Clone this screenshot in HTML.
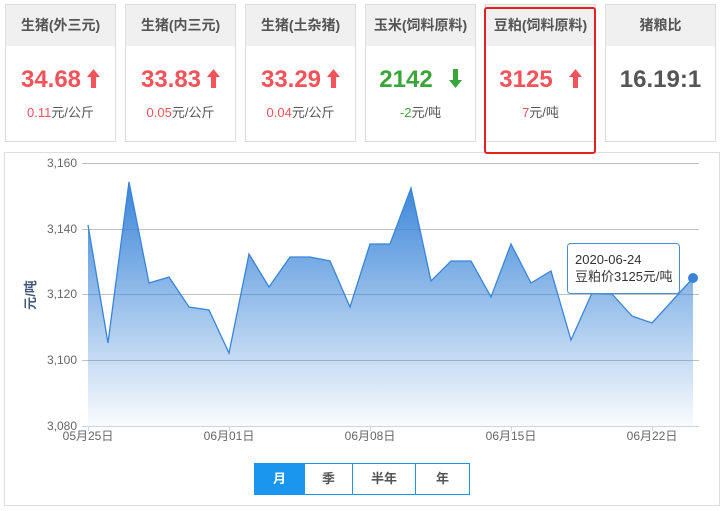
<!DOCTYPE html>
<html><head><meta charset="utf-8"><style>
*{margin:0;padding:0;box-sizing:border-box}
body{width:725px;height:511px;background:#fff;font-family:"Liberation Sans","Noto Sans CJK SC",sans-serif;position:relative;overflow:hidden}
.card{position:absolute;top:4px;width:111px;height:138px;border:1px solid #ddd;background:#fff;text-align:center}
.card .h{height:41px;background:#f0f0f0;line-height:41px;font-size:14px;font-weight:bold;color:#555}
.card .v{margin-top:20px;font-size:24px;font-weight:bold;line-height:28px;white-space:nowrap}
.card .v svg{vertical-align:-1px;margin-left:6px}
.card .s{margin-top:8px;font-size:13px;color:#555}
.r{color:#f5535a}.g{color:#3aa63a}
.sel{position:absolute;left:484px;top:7px;width:112px;height:147px;border:2px solid #e52020;border-radius:3px;z-index:5}
.chart{position:absolute;left:4px;top:152px;width:716px;height:354px;border:1px solid #ddd}
.btns{position:absolute;left:254px;top:463px;width:216px;height:32px;border:1px solid #1a96ee;display:flex}
.btns div{text-align:center;line-height:30px;font-size:13px;font-weight:bold;color:#555;border-left:1px solid #1a96ee}
.btns div:first-child{border-left:none;background:#1a96ee;color:#fff}
</style></head><body>
<div class="card" style="left:5px"><div class="h">生猪(外三元)</div><div class="v r">34.68<svg width="13" height="19" viewBox="0 0 13 19"><path d="M6.5 0L13 8H9V19H4V8H0Z" fill="#f5535a"/></svg></div><div class="s"><span class="r">0.11</span>元/公斤</div></div>
<div class="card" style="left:125px"><div class="h">生猪(内三元)</div><div class="v r">33.83<svg width="13" height="19" viewBox="0 0 13 19"><path d="M6.5 0L13 8H9V19H4V8H0Z" fill="#f5535a"/></svg></div><div class="s"><span class="r">0.05</span>元/公斤</div></div>
<div class="card" style="left:245px"><div class="h">生猪(土杂猪)</div><div class="v r">33.29<svg width="13" height="19" viewBox="0 0 13 19"><path d="M6.5 0L13 8H9V19H4V8H0Z" fill="#f5535a"/></svg></div><div class="s"><span class="r">0.04</span>元/公斤</div></div>
<div class="card" style="left:365px"><div class="h">玉米(饲料原料)</div><div class="v g">2142<svg style="margin-left:16px" width="13" height="19" viewBox="0 0 13 19"><path d="M6.5 19L13 11H9V0H4V11H0Z" fill="#3aa63a"/></svg></div><div class="s"><span class="g">-2</span>元/吨</div></div>
<div class="card" style="left:485px"><div class="h">豆粕(饲料原料)</div><div class="v r">3125<svg style="margin-left:16px" width="13" height="19" viewBox="0 0 13 19"><path d="M6.5 0L13 8H9V19H4V8H0Z" fill="#f5535a"/></svg></div><div class="s"><span class="r">7</span>元/吨</div></div>
<div class="card" style="left:605px"><div class="h">猪粮比</div><div class="v" style="color:#555">16.19:1</div></div>
<div class="chart"></div>
<div class="sel"></div>
<svg style="position:absolute;left:0;top:0" width="725" height="511">
<defs><linearGradient id="gr" x1="0" y1="0" x2="0" y2="1"><stop offset="0" stop-color="#3a85d8"/><stop offset="1" stop-color="#3a85d8" stop-opacity="0.03"/></linearGradient></defs>
<g stroke="#c0c0c0" stroke-width="1">
<line x1="82" y1="163.5" x2="699" y2="163.5"/><line x1="82" y1="229.5" x2="699" y2="229.5"/><line x1="82" y1="294.5" x2="699" y2="294.5"/><line x1="82" y1="360.5" x2="699" y2="360.5"/>
</g>
<polygon fill="url(#gr)" points="88,225 108,343 129,182 149,283 169,277 189,307 209,310 229,353 249,254 269,287 290,257 310,257 330,261 350,307 370,244 390,244 411,188 431,281 451,261 471,261 491,297 511,244 531,283 551,271 571,340 592,293 612,294 632,316 652,323 693,278 693,426 88,426"/>
<polyline fill="none" stroke="#3a85d8" stroke-width="1.3" points="88,225 108,343 129,182 149,283 169,277 189,307 209,310 229,353 249,254 269,287 290,257 310,257 330,261 350,307 370,244 390,244 411,188 431,281 451,261 471,261 491,297 511,244 531,283 551,271 571,340 592,293 612,294 632,316 652,323 693,278"/>
<line x1="82" y1="426.5" x2="699" y2="426.5" stroke="#c8d6e6"/>
<g stroke="#c8d6e6"><line x1="88.5" y1="426" x2="88.5" y2="431"/><line x1="229.5" y1="426" x2="229.5" y2="431"/><line x1="370.5" y1="426" x2="370.5" y2="431"/><line x1="511.5" y1="426" x2="511.5" y2="431"/><line x1="652.5" y1="426" x2="652.5" y2="431"/></g>
<g font-size="12" fill="#666" text-anchor="end"><text x="77" y="167">3,160</text><text x="77" y="233">3,140</text><text x="77" y="298">3,120</text><text x="77" y="364">3,100</text><text x="77" y="430">3,080</text></g>
<g font-size="12" fill="#666" text-anchor="middle"><text x="88" y="440">05月25日</text><text x="229" y="440">06月01日</text><text x="370" y="440">06月08日</text><text x="511" y="440">06月15日</text><text x="652" y="440">06月22日</text></g>
<text x="0" y="0" transform="translate(35,295) rotate(-90)" text-anchor="middle" font-size="13" font-weight="bold" fill="#44597a">元/吨</text>
<rect x="567.5" y="243.5" width="112" height="50" rx="3" fill="#fff" stroke="#4a90d9" stroke-width="1"/>
<text x="575" y="264" font-size="13" fill="#333">2020-06-24</text>
<text x="575" y="281" font-size="13" fill="#333">豆粕价3125元/吨</text>
<circle cx="693" cy="278" r="5" fill="#3a85d8"/>
</svg>
<div class="btns"><div style="width:49px">月</div><div style="width:48px">季</div><div style="width:63px">半年</div><div style="width:54px">年</div></div>
</body></html>
